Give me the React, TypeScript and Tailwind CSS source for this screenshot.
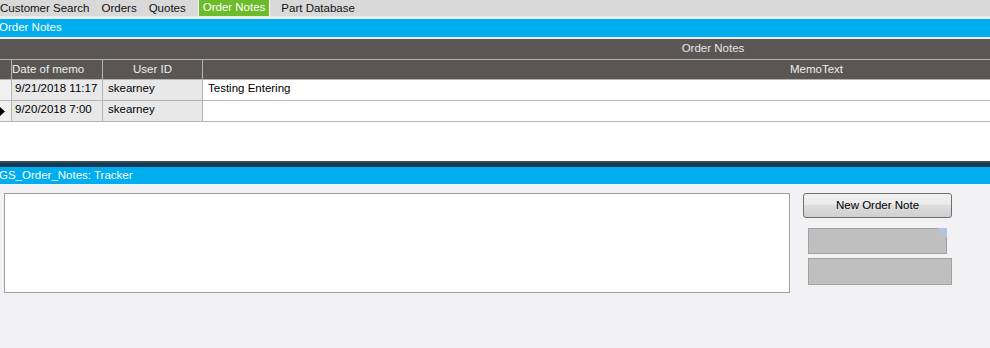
const tabs = ["Customer Search", "Orders", "Quotes", "Order Notes", "Part Database"];

const rows = [
  { date: "9/21/2018 11:17", user: "skearney", memo: "Testing Entering", current: false },
  { date: "9/20/2018 7:00", user: "skearney", memo: "", current: true },
];

export default function App() {
  return (
    <div className="w-[990px] h-[348px] overflow-hidden bg-[#f2f2f4] font-['Liberation_Sans',Arial,sans-serif] text-[11.5px] text-black flex flex-col">
      {/* tab strip */}
      <div className="h-[16px] bg-[#d9d9d9] flex items-stretch">
        {tabs.map((t) =>
          t === "Order Notes" ? (
            <div key={t} className="ml-[6px] mr-[5px] px-[4px] bg-[#6cbb2a] border-x border-white text-white leading-[14px] h-[17px]">
              {t}
            </div>
          ) : (
            <div key={t} className="px-[6px] first:pl-0 leading-[16px] text-[#111]">
              {t}
            </div>
          )
        )}
      </div>
      <div className="h-[3px] bg-[#ececec]" />

      {/* grid panel caption */}
      <div className="h-[18px] bg-[#00aeef] text-white leading-[17px] -indent-[1px] whitespace-nowrap">Order Notes</div>
      <div className="h-[2px] bg-[#ececec]" />

      {/* grid */}
      <div className="bg-white h-[122px] flex flex-col">
        <div className="h-[20px] bg-[#595653] text-[#e6e6e6] flex items-center justify-center pl-[436px]">Order Notes</div>
        <div className="h-[1px] bg-[#b4b4b4]" />
        <div className="h-[20px] bg-[#595653] text-[#eee] flex border-b border-[#b4b4b4]">
          <div className="w-[12px] border-r border-[#b4b4b4]" />
          <div className="w-[91px] border-r border-[#b4b4b4] flex items-center">Date of memo</div>
          <div className="w-[100px] border-r border-[#b4b4b4] flex items-center justify-center">User ID</div>
          <div className="flex-1 flex items-center justify-center pl-[440px]">MemoText</div>
        </div>
        {rows.map((r) => (
          <div key={r.date} className="h-[21px] flex border-b border-[#b4b4b4]">
            <div className="w-[12px] bg-[#f0f0f0] border-r border-[#b4b4b4] flex items-center">
              {r.current && (
                <svg width="6" height="9" viewBox="0 0 6 9">
                  <path d="M0 0 L5 4.5 L0 9 Z" fill="#000" />
                </svg>
              )}
            </div>
            <div className="w-[91px] bg-[#e8e8e8] border-r border-[#b4b4b4] pl-[3px] leading-[16px]">{r.date}</div>
            <div className="w-[100px] bg-[#e8e8e8] border-r border-[#b4b4b4] pl-[5px] leading-[16px]">{r.user}</div>
            <div className="flex-1 bg-white pl-[5px] leading-[16px]">{r.memo}</div>
          </div>
        ))}
      </div>

      {/* tracker caption */}
      <div className="h-[2px] bg-[#3a4a55]" />
      <div className="h-[4px] bg-[#0d3a58]" />
      <div className="h-[17px] bg-[#00aeef] text-white leading-[17px] -indent-[1px] whitespace-nowrap">GS_Order_Notes: Tracker</div>

      {/* tracker body */}
      <div className="flex items-start pt-[9px] pl-[4px]">
        <div className="w-[786px] h-[100px] bg-white border border-[#a0a0a0]" />
        <div className="ml-[13px] w-[149px] flex flex-col">
          <button className="h-[25px] w-[149px] rounded-[3px] border border-[#707070] bg-[linear-gradient(#f2f2f2_0%,#ebebeb_45%,#dddddd_50%,#cfcfcf_100%)] text-[11.5px] text-black font-['Liberation_Sans',Arial,sans-serif]">
            New Order Note
          </button>
          <div className="relative mt-[10px] ml-[5px] w-[139px] h-[26px] bg-[#bfbfbf] border border-[#a0a0a0]">
            <svg className="absolute right-[-1px] top-[-1px]" width="10" height="10" viewBox="0 0 10 10">
              <path d="M0 0 H10 V10 Z" fill="#aec4e4" />
            </svg>
          </div>
          <div className="mt-[4px] ml-[5px] w-[144px] h-[27px] bg-[#bfbfbf] border border-[#a0a0a0]" />
        </div>
      </div>
    </div>
  );
}
